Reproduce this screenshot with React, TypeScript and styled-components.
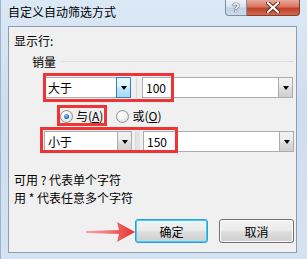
import React, { FC } from 'react'
import styled, { createGlobalStyle } from 'styled-components'

const Global = createGlobalStyle`
    html, body {
        margin: 0;
        padding: 0;
        background: #ffffff;
    }
    body {
        font-family: "Noto Sans CJK SC", "Liberation Sans", sans-serif;
        font-size: 12px;
        color: #000;
    }
`

const Window = styled.div`
    position: relative;
    width: 307px;
    height: 259px;
    box-sizing: border-box;
    background: linear-gradient(180deg, #dbe8f6 0%, #cfdeef 40%, #d4e2f1 100%);
    border-left: 1px solid #9db3cf;
    display: flex;
    flex-direction: column;
    overflow: hidden;
`

const TitleBar = styled.div`
    height: 26px;
    display: flex;
    align-items: flex-start;
    padding-left: 7px;
    padding-right: 7px;
`

const Title = styled.div`
    line-height: 24px;
    font-size: 12px;
    color: #000;
`

const Caption = styled.div`
    margin-left: auto;
    display: flex;
`

const CapButton = styled.div<{ $close?: boolean }>`
    height: 16px;
    width: ${p => (p.$close ? 53 : 22)}px;
    box-sizing: border-box;
    border: 1px solid ${p => (p.$close ? '#8a3b30' : '#7d8fa8')};
    border-top: none;
    border-left: ${p => (p.$close ? 'none' : '1px solid #7d8fa8')};
    border-radius: ${p => (p.$close ? '0 0 4px 0' : '0 0 0 4px')};
    background: ${p =>
        p.$close
            ? 'linear-gradient(180deg, #e9a99b 0%, #d7765f 45%, #c0412a 55%, #d16a4c 100%)'
            : 'linear-gradient(180deg, #eef3f9 0%, #d9e3ee 45%, #c3d2e3 55%, #d0dcea 100%)'};
    display: flex;
    align-items: center;
    justify-content: center;
    font-family: "Liberation Sans", sans-serif;
    font-weight: bold;
    color: #fff;
`

const HelpGlyph = styled.span`
    font-size: 12px;
    line-height: 14px;
    color: #fff;
    text-shadow: 0 0 1px #3d4f68, 0 0 1px #3d4f68, 0 0 1px #3d4f68;
`

const Panel = styled.div`
    margin: 0 10px 0 7px;
    height: 227px;
    box-sizing: border-box;
    border: 1px solid #8d9cb0;
    background: #f0f0f0;
    padding: 6px 0 0 5px;
    display: flex;
    flex-direction: column;
`

const Label = styled.div`
    line-height: 16px;
`

const GroupHead = styled.div`
    margin-top: 5px;
    display: flex;
    align-items: center;
    padding-left: 18px;
    padding-right: 2px;
    line-height: 16px;
`

const GroupLine = styled.div`
    flex: 1;
    height: 1px;
    margin-left: 5px;
    margin-top: -1px;
    background: #d5dfe6;
`

const Row = styled.div<{ $top: number }>`
    position: relative;
    margin-top: ${p => p.$top}px;
    padding-left: 30px;
    display: flex;
    align-items: center;
`

const Combo = styled.div<{ $w: number }>`
    width: ${p => p.$w}px;
    height: 21px;
    box-sizing: border-box;
    border: 1px solid #abadb3;
    background: #fff;
    display: flex;
    align-items: stretch;
`

const ComboText = styled.div`
    flex: 1;
    padding-left: 3px;
    line-height: 19px;
    font-size: 12px;
`

const DropButton = styled.div<{ $hot?: boolean }>`
    width: 15px;
    box-sizing: border-box;
    border: 1px solid ${p => (p.$hot ? '#3c7fb1' : '#acacac')};
    margin: -1px -1px -1px 0;
    background: ${p =>
        p.$hot
            ? 'linear-gradient(180deg, #eaf6fd 0%, #d9f0fc 45%, #bee6fd 55%, #a7d9f5 100%)'
            : 'linear-gradient(180deg, #f2f2f2 0%, #ebebeb 45%, #dddddd 55%, #cfcfcf 100%)'};
    display: flex;
    align-items: center;
    justify-content: center;
`

const Triangle = styled.div`
    width: 0;
    height: 0;
    border-left: 3.5px solid transparent;
    border-right: 3.5px solid transparent;
    border-top: 4px solid #000;
`

const Gap = styled.div<{ $line?: boolean }>`
    width: 11px;
    align-self: stretch;
    display: flex;
    justify-content: center;
    &::before {
        content: '';
        width: ${p => (p.$line ? 4 : 0)}px;
        background: #e4e4e4;
        border-left: 1px solid #d8d8d8;
    }
`

const RadioRow = styled.div`
    position: relative;
    margin-top: 10px;
    padding-left: 46px;
    display: flex;
    align-items: center;
    gap: 13px;
    line-height: 16px;
`

const RadioItem = styled.div`
    display: flex;
    align-items: center;
    gap: 3px;
`

const RadioCircle = styled.div<{ $on?: boolean }>`
    width: 13px;
    height: 13px;
    box-sizing: border-box;
    border-radius: 50%;
    border: 1px solid #8e8f8f;
    background: radial-gradient(circle at 40% 35%, #ffffff 0%, #f0f0f0 50%, #d0d0d0 100%);
    display: flex;
    align-items: center;
    justify-content: center;
    &::after {
        content: '';
        display: ${p => (p.$on ? 'block' : 'none')};
        width: 5px;
        height: 5px;
        border-radius: 50%;
        background: radial-gradient(circle at 40% 35%, #8fd0f5 0%, #2173b6 60%, #0d4c8a 100%);
    }
`

const Key = styled.span`
    text-decoration: underline;
`

const Mark = styled.div<{ $l: number; $t: number; $w: number; $h: number }>`
    position: absolute;
    left: ${p => p.$l}px;
    top: ${p => p.$t}px;
    width: ${p => p.$w}px;
    height: ${p => p.$h}px;
    box-sizing: border-box;
    border: 3px solid #ee3434;
    pointer-events: none;
`

const Hint = styled.div<{ $top: number }>`
    margin-top: ${p => p.$top}px;
    line-height: 16px;
`

const Buttons = styled.div`
    position: relative;
    margin-top: 13px;
    display: flex;
    justify-content: flex-end;
    gap: 11px;
    padding-right: 2px;
`

const Button = styled.div<{ $focus?: boolean }>`
    width: ${p => (p.$focus ? 73 : 75)}px;
    height: 24px;
    box-sizing: border-box;
    border: 1px solid ${p => (p.$focus ? '#3399dd' : '#707070')};
    border-radius: 3px;
    box-shadow: ${p => (p.$focus ? 'inset 0 0 0 1px #38d2f2' : 'inset 0 0 0 1px #fbfbfb')};
    background: linear-gradient(180deg, #f2f2f2 0%, #ebebeb 45%, #dddddd 55%, #cfcfcf 100%);
    display: flex;
    align-items: center;
    justify-content: center;
    font-size: 12px;
`

const Arrow = styled.svg`
    position: absolute;
    left: 72px;
    top: 1px;
`

const App: FC = () => {
    return (
        <Window>
            <Global />
            <TitleBar>
                <Title>自定义自动筛选方式</Title>
                <Caption>
                    <CapButton>
                        <HelpGlyph>?</HelpGlyph>
                    </CapButton>
                    <CapButton $close>
                        <svg width="14" height="11" viewBox="0 0 14 11">
                            <path
                                d="M2 1 L12 10 M12 1 L2 10"
                                stroke="#5a2a22"
                                strokeWidth="4"
                                strokeLinecap="round"
                            />
                            <path
                                d="M2 1 L12 10 M12 1 L2 10"
                                stroke="#ffffff"
                                strokeWidth="2.2"
                                strokeLinecap="round"
                            />
                        </svg>
                    </CapButton>
                </Caption>
            </TitleBar>
            <Panel>
                <Label>显示行:</Label>
                <GroupHead>
                    销量
                    <GroupLine />
                </GroupHead>
                <Row $top={7}>
                    <Combo $w={87}>
                        <ComboText>大于</ComboText>
                        <DropButton $hot>
                            <Triangle />
                        </DropButton>
                    </Combo>
                    <Gap />
                    <Combo $w={151}>
                        <ComboText>100</ComboText>
                        <DropButton>
                            <Triangle />
                        </DropButton>
                    </Combo>
                    <Mark $l={29} $t={-4} $w={131} $h={29} />
                </Row>
                <RadioRow>
                    <RadioItem>
                        <RadioCircle $on />
                        <span>
                            与(<Key>A</Key>)
                        </span>
                    </RadioItem>
                    <RadioItem>
                        <RadioCircle />
                        <span>
                            或(<Key>O</Key>)
                        </span>
                    </RadioItem>
                    <Mark $l={43} $t={-3} $w={50} $h={21} />
                </RadioRow>
                <Row $top={7}>
                    <Combo $w={88}>
                        <ComboText>小于</ComboText>
                        <DropButton>
                            <Triangle />
                        </DropButton>
                    </Combo>
                    <Gap $line />
                    <Combo $w={151}>
                        <ComboText>150</ComboText>
                        <DropButton>
                            <Triangle />
                        </DropButton>
                    </Combo>
                    <Mark $l={26} $t={-4} $w={138} $h={26} />
                </Row>
                <Hint $top={20}>可用 ? 代表单个字符</Hint>
                <Hint $top={2}>用 * 代表任意多个字符</Hint>
                <Buttons>
                    <Arrow width="50" height="24" viewBox="0 0 50 24">
                        <defs>
                            <linearGradient id="tail" x1="0" x2="1" y1="0" y2="0">
                                <stop offset="0" stopColor="#f06060" stopOpacity="0.5" />
                                <stop offset="1" stopColor="#e82f2f" />
                            </linearGradient>
                        </defs>
                        <path d="M0 11 L33 10 L31 2 L49 12 L31 22 L33 14 L0 13 Z" fill="url(#tail)" />
                    </Arrow>
                    <Button $focus>确定</Button>
                    <Button>取消</Button>
                </Buttons>
            </Panel>
        </Window>
    )
}

export default App
